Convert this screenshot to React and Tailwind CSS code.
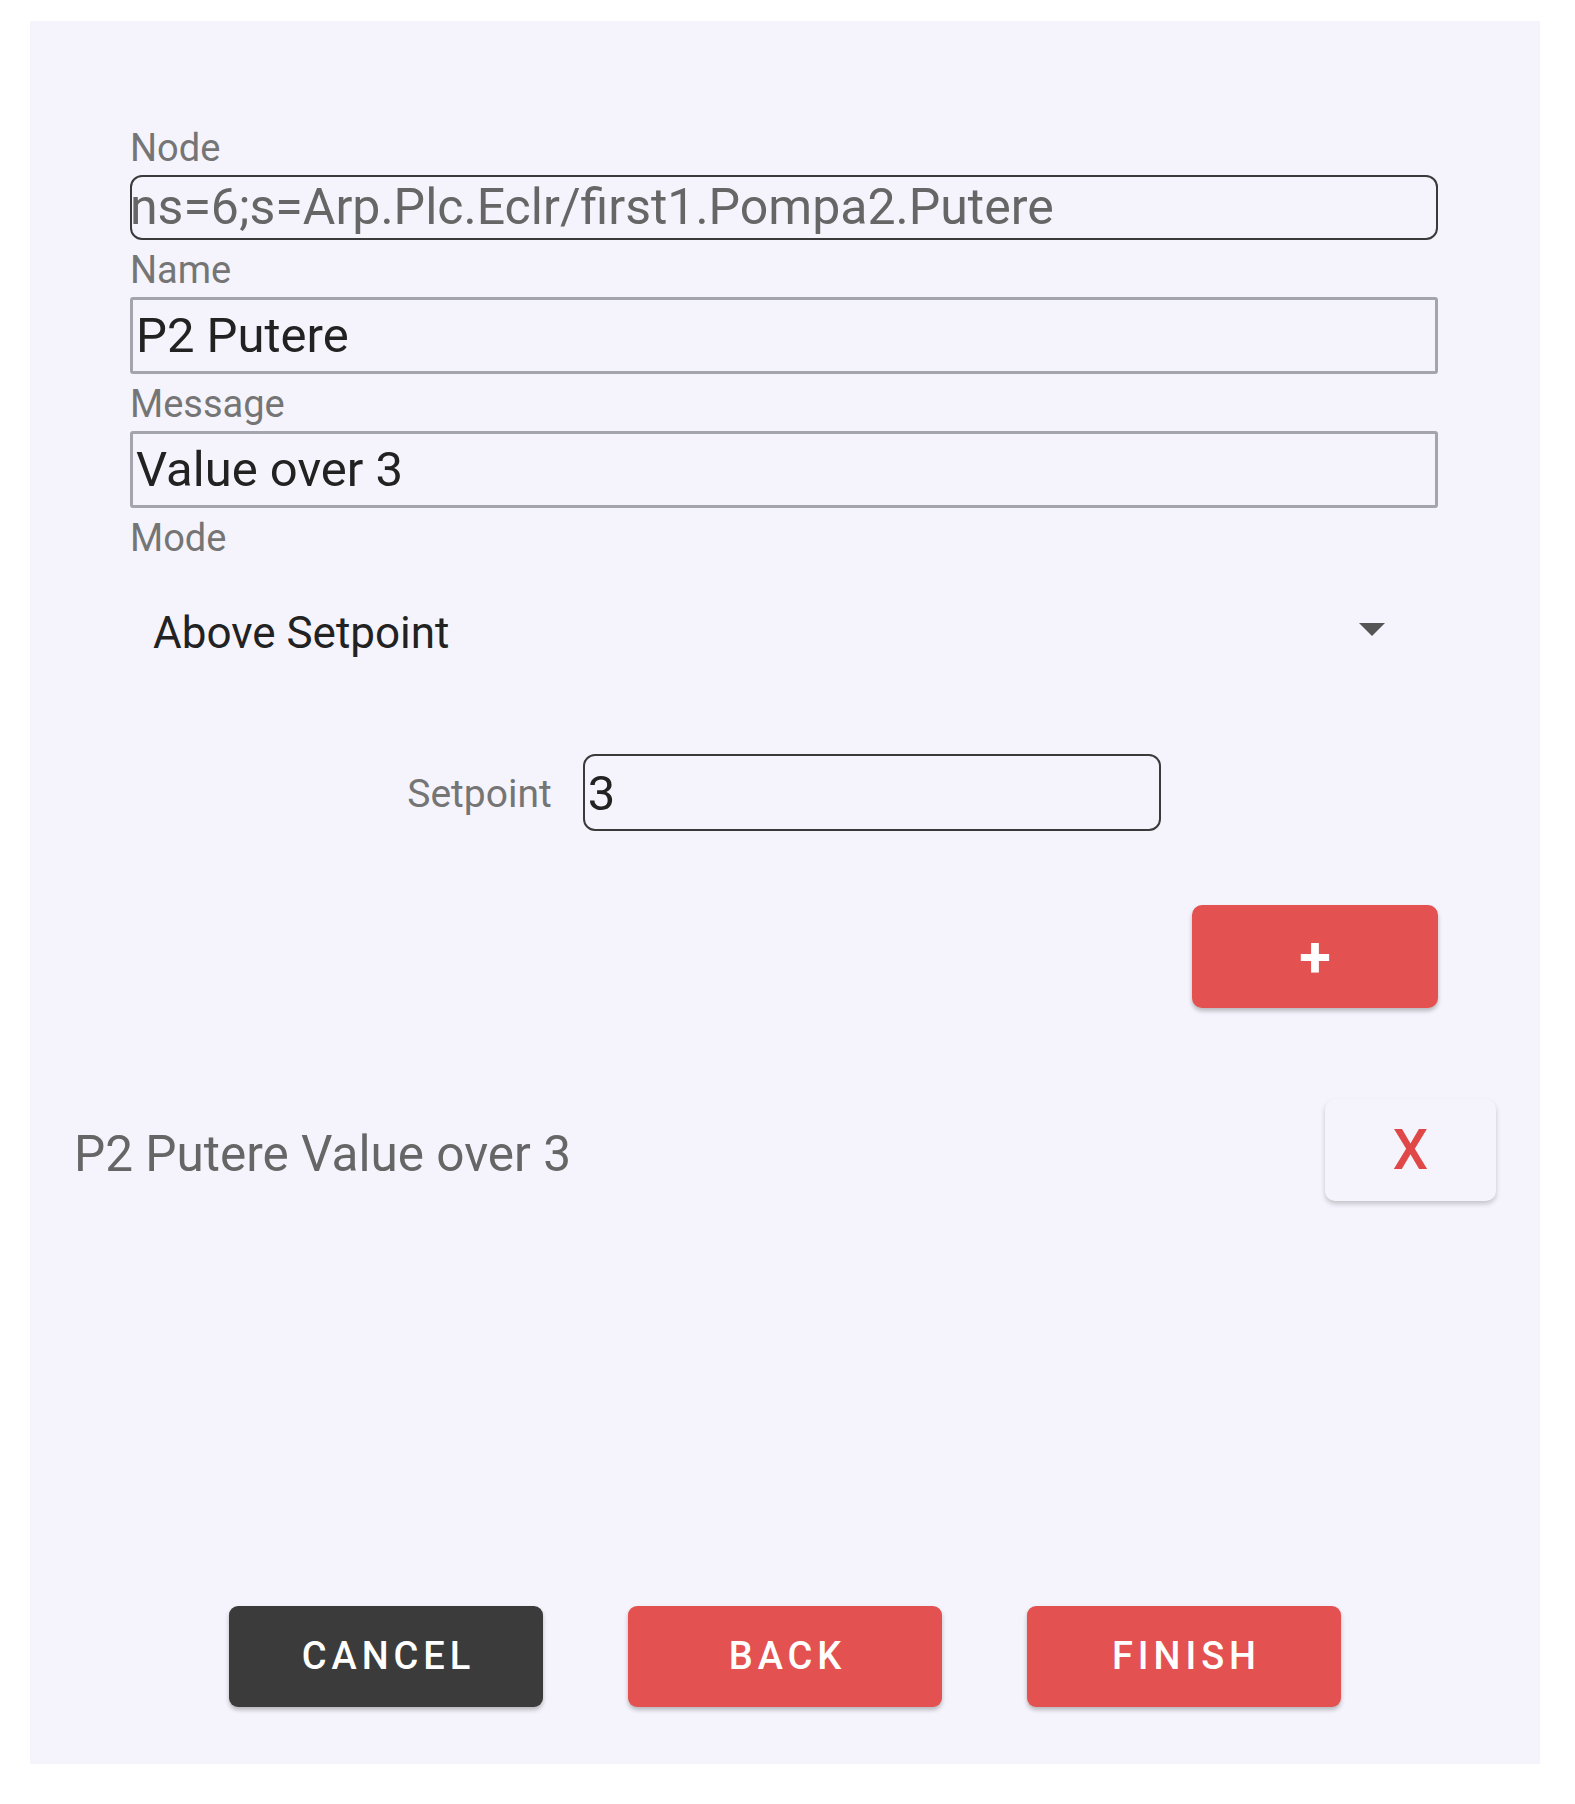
import React from "react";

const Label = ({ children }) => (
  <div className="pt-[4px] text-[38px] leading-[53px] text-[#757575]">{children}</div>
);

const TextBox = ({ value }) => (
  <div className="flex h-[77px] items-center rounded-[3px] border-[3px] border-[#a4a4ac] px-[3px] text-[49px] text-[#222]">
    {value}
  </div>
);

const BigButton = ({ label, dark }) => (
  <button
    className={
      dark
        ? "flex h-[101px] w-[314px] items-center justify-center rounded-[9px] bg-[#3b3b3b] pl-[5px] text-[38px] font-medium tracking-[0.13em] text-white shadow-[0_3px_4px_rgba(0,0,0,0.25)]"
        : "flex h-[101px] w-[314px] items-center justify-center rounded-[9px] bg-[#e45151] pl-[5px] text-[38px] font-medium tracking-[0.13em] text-white shadow-[0_3px_4px_rgba(0,0,0,0.25)]"
    }
  >
    {label}
  </button>
);

export default function App() {
  return (
    <div className="min-h-[1804px] bg-white px-[30px] pt-[21px] font-[family-name:Roboto,sans-serif]">
      <div className="flex h-[1743px] w-[1510px] flex-col bg-[#f5f4fc]">
        <div className="pl-[100px] pr-[102px] pt-[97px]">
          <Label>Node</Label>
          <div className="flex h-[65px] items-center overflow-hidden rounded-[12px] border-2 border-[#3a3a3a]">
            <span className="-ml-[2px] whitespace-nowrap text-[50px] text-[#666]">
              ns=6;s=Arp.Plc.Eclr/first1.Pompa2.Putere
            </span>
          </div>

          <Label>Name</Label>
          <TextBox value="P2 Putere" />

          <Label>Message</Label>
          <TextBox value="Value over 3" />

          <Label>Mode</Label>
          <div className="flex h-[136px] items-center justify-between pl-[23px] pr-[53px] text-[44px] text-[#222]">
            <span>Above Setpoint</span>
            <svg width="26" height="13" viewBox="0 0 26 13" className="-mt-[8px]">
              <path d="M0 0 L26 0 L13 13 Z" fill="#555" />
            </svg>
          </div>

          <div className="mt-[53px] flex items-center justify-center gap-[31px]">
            <span className="pt-[3px] text-[39px] text-[#757575]">Setpoint</span>
            <div className="flex h-[77px] w-[578px] items-center rounded-[12px] border-2 border-[#3a3a3a] px-[3px] pt-[3px] text-[49px] text-[#222]">
              3
            </div>
          </div>

          <div className="mt-[74px] flex justify-end">
            <button className="flex h-[103px] w-[246px] items-center justify-center rounded-[10px] bg-[#e45151] text-[58px] font-bold leading-none text-white shadow-[0_3px_4px_rgba(0,0,0,0.25)]">
              +
            </button>
          </div>
        </div>

        <div className="mt-[91px] flex items-center justify-between px-[44px]">
          <span className="pt-[8px] text-[49.5px] text-[#666]">P2 Putere Value over 3</span>
          <button className="flex h-[102px] w-[171px] items-center justify-center rounded-[10px] bg-[#f5f4fc] text-[56px] font-medium text-[#e04848] shadow-[0_3px_5px_rgba(0,0,0,0.2)]">
            X
          </button>
        </div>

        <div className="mb-[57px] mt-auto flex justify-center gap-[85px]">
          <BigButton label="CANCEL" dark />
          <BigButton label="BACK" />
          <BigButton label="FINISH" />
        </div>
      </div>
    </div>
  );
}
